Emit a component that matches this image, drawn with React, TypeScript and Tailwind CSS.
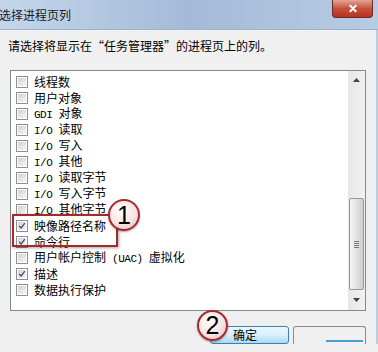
import React from "react"

const items = [
  { label: "线程数", checked: false },
  { label: "用户对象", checked: false },
  { label: "GDI 对象", checked: false },
  { label: "I/O 读取", checked: false },
  { label: "I/O 写入", checked: false },
  { label: "I/O 其他", checked: false },
  { label: "I/O 读取字节", checked: false },
  { label: "I/O 写入字节", checked: false },
  { label: "I/O 其他字节", checked: false },
  { label: "映像路径名称", checked: true },
  { label: "命令行", checked: true },
  { label: "用户帐户控制 (UAC) 虚拟化", checked: false },
  { label: "描述", checked: true },
  { label: "数据执行保护", checked: false },
]

// Latin runs are drawn half-width, like SimSun
function Label({ text }: { text: string }) {
  const parts = text.split(/([\x20-\x7e]+)/).filter(Boolean)
  return (
    <span className="whitespace-pre">
      {parts.map((p, i) =>
        /^[\x20-\x7e]+$/.test(p) ? (
          <span key={i} className="font-['Liberation_Mono',monospace] text-[11px] tracking-[-0.5px]">
            {p}
          </span>
        ) : (
          <span key={i}>{p}</span>
        )
      )}
    </span>
  )
}

function Checkbox({ checked }: { checked: boolean }) {
  return (
    <div className="w-[12px] h-[12px] border border-[#8f8f8f] bg-white p-px shrink-0">
      <div className="w-full h-full bg-gradient-to-br from-[#d2d2d2] to-[#f6f6f6] relative">
        {checked && (
          <svg viewBox="0 0 10 10" className="absolute inset-0 w-full h-full">
            <path d="M1.5 5 L4 7.5 L8.5 1.5" fill="none" stroke="#3d4f7e" strokeWidth="1.6" />
          </svg>
        )}
      </div>
    </div>
  )
}

function Badge({ n, className }: { n: string; className: string }) {
  return (
    <div
      className={`absolute rounded-full border-[2.5px] border-[#a8282c] bg-[radial-gradient(circle_at_40%_35%,#ffffff_0%,#f7e4e4_55%,#e6b7b7_100%)] shadow-[0_1px_2px_rgba(0,0,0,0.35)] flex items-center justify-center font-['Liberation_Sans',sans-serif] text-[25px] leading-none text-black ${className}`}
    >
      {n}
    </div>
  )
}

export default function App() {
  return (
    <div className="relative w-[378px] h-[352px] overflow-hidden bg-[#f0f0f0] font-['Noto_Sans_CJK_SC',sans-serif] text-[12px] text-black">
      {/* Title bar */}
      <div className="h-[30px] flex items-center bg-gradient-to-r from-[#c4d6eb] via-[#a3bbd8] to-[#b7cbe3] border-b border-[#9fb3cc]">
        <span className="-ml-px text-[12px] leading-none text-[#1a1a1a]">选择进程页列</span>
        <div className="ml-auto mr-[5px] self-start w-[41px] h-[18px] rounded-b-[4px] border border-t-0 border-[#6b2a22] bg-gradient-to-b from-[#e2a596] via-[#c6503c] to-[#b5321e] flex items-center justify-center">
          <svg viewBox="0 0 10 10" className="w-[10px] h-[9px]">
            <path d="M2 2 L8 8 M8 2 L2 8" stroke="white" strokeWidth="2.2" strokeLinecap="round" />
          </svg>
        </div>
      </div>

      <div className="flex">
        <div className="flex-1">
          <p className="pl-[8px] pt-[9px] leading-[14px]">请选择将显示在“任务管理器”的进程页上的列。</p>

          {/* List */}
          <div className="ml-[10px] mt-[17px] w-[356px] h-[241px] border border-[#828790] bg-white flex">
            <div className="flex-1 pt-[3px]">
              {items.map((it) => (
                <div key={it.label} className="h-[16px] flex items-center pl-[5px] gap-[6px]">
                  <Checkbox checked={it.checked} />
                  <Label text={it.label} />
                </div>
              ))}
            </div>
            {/* Scrollbar */}
            <div className="w-[17px] bg-gradient-to-r from-[#e6e6e6] to-[#f2f2f2] flex flex-col items-center">
              <div className="h-[17px] flex items-center justify-center">
                <svg viewBox="0 0 7 4" className="w-[7px] h-[4px]">
                  <path d="M0 4 L3.5 0 L7 4 Z" fill="#404040" />
                </svg>
              </div>
              <div className="mt-[110px] w-[15px] h-[92px] rounded-[2px] border border-[#979797] bg-gradient-to-r from-[#f4f4f4] via-[#e2e2e2] to-[#cfcfcf] flex flex-col items-center justify-center gap-[1px]">
                <div className="w-[5px] h-px bg-[#7a7a7a]" />
                <div className="w-[5px] h-px bg-[#7a7a7a]" />
                <div className="w-[5px] h-px bg-[#7a7a7a]" />
                <div className="w-[5px] h-px bg-[#7a7a7a]" />
              </div>
              <div className="flex-1 flex items-center justify-center">
                <svg viewBox="0 0 7 4" className="w-[7px] h-[4px]">
                  <path d="M0 0 L3.5 4 L7 0 Z" fill="#404040" />
                </svg>
              </div>
            </div>
          </div>

          {/* Buttons */}
          <div className="mt-[15px] flex pl-[210px] gap-[4px]">
            <div className="w-[79px] h-[18px] rounded-[3px] border border-[#3c7fb1] bg-gradient-to-b from-[#eaf6fd] via-[#d9f0fc] to-[#a7d9f5] flex items-center pl-[22px]">
              确定
            </div>
            <div className="w-[73px] h-[18px] rounded-t-[3px] border border-b-0 border-[#8a8a8a] relative">
              <div className="absolute left-[32px] right-[2px] bottom-[2px] h-[2px] bg-[#4a9ed0]" />
            </div>
          </div>
        </div>
        <div className="w-[2px] bg-[#b8cde4]" />
      </div>

      {/* Annotations */}
      <div className="absolute left-[12px] top-[214px] w-[106px] h-[33px] border-2 border-[#a4282c] shadow-[1px_1px_3px_rgba(0,0,0,0.35)]" />
      <Badge n="1" className="left-[108px] top-[199px] w-[32px] h-[32px]" />
      <Badge n="2" className="left-[197px] top-[310px] w-[31px] h-[31px]" />
    </div>
  )
}
